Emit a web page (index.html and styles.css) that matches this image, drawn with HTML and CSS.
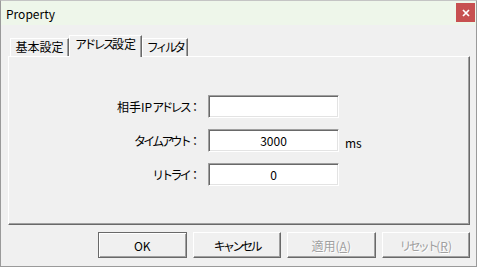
FILE: index.html
```html
<!DOCTYPE html>
<html>

<head>
    <meta charset="utf-8">
    <link rel="stylesheet" href="styles.css">
</head>

<body>
    <div class="window">
        <div class="titlebar">
            <span class="title">Property</span>
            <div class="close">
                <svg width="8" height="8" viewBox="0 0 8 8">
                    <path d="M1 1L7 7M7 1L1 7" stroke="#fff" stroke-width="1.7" fill="none"/>
                </svg>
            </div>
        </div>

        <div class="content">
            <div class="tabs">
                <div class="tab tab-basic">基本設定</div>
                <div class="tab tab-addr active"><span class="kana">アドレス</span>設定</div>
                <div class="tab tab-filter"><span class="kana">フィルタ</span></div>
            </div>

            <div class="panel">
                <div class="form">
                    <span class="label">相手IP<span class="kana">アドレス</span>：</span>
                    <div class="field"></div>
                    <span></span>

                    <span class="label"><span class="kana">タイムアウト</span>：</span>
                    <div class="field">3000</div>
                    <span class="unit">ms</span>

                    <span class="label"><span class="kana">リトライ</span>：</span>
                    <div class="field">0</div>
                    <span></span>
                </div>
            </div>

            <div class="buttons">
                <button class="btn btn-default">OK</button>
                <button class="btn"><span class="kana">キャンセル</span></button>
                <button class="btn btn-disabled">適用(<u>A</u>)</button>
                <button class="btn btn-disabled"><span class="kana">リセット</span>(<u>R</u>)</button>
            </div>
        </div>
    </div>
</body>

</html>
```

FILE: styles.css
```css
body {
    margin: 0;
    font-family: "Noto Sans CJK JP", sans-serif;
    font-size: 12px;
    color: #000;
    background-color: #f0f0f0;
}

.window {
    width: 477px;
    height: 267px;
    box-sizing: border-box;
    border: 1px solid #9a9a9a;
    border-top-color: #c4c4c4;
    background-color: #f0f0f0;
}

.titlebar {
    height: 24px;
    display: flex;
    justify-content: space-between;
    align-items: flex-start;
    padding: 0 1px 0 5px;
    background-color: #eef6ea;
}

.title {
    line-height: 25px;
}

.close {
    width: 19px;
    height: 19px;
    margin-top: 2px;
    display: flex;
    align-items: center;
    justify-content: center;
    background-color: #c75050;
}

.content {
    padding: 10px 6px 0 7px;
}

/* katakana in the reference font is narrow */
.kana {
    letter-spacing: -2.8px;
}

/* TABS */
.tabs {
    display: flex;
    align-items: flex-end;
    height: 21px;
    padding-left: 2px;
}

.tab {
    height: 18px;
    box-sizing: border-box;
    border-top: 1px solid #fff;
    border-left: 1px solid #fff;
    border-right: 1px solid #696969;
    box-shadow: inset -1px 0 #a0a0a0;
    display: flex;
    align-items: center;
    justify-content: center;
    padding-bottom: 1px;
    line-height: 1;
}

.tab-basic {
    width: 59px;
}

.tab-addr {
    width: 73px;
}

.tab-filter {
    width: 46px;
}

.tab.active {
    height: 22px;
    margin-bottom: -1px;
    padding-bottom: 5px;
    position: relative;
    z-index: 1;
    background-color: #f0f0f0;
}

/* PANEL */
.panel {
    height: 169px;
    box-sizing: border-box;
    border: 1px solid;
    border-color: #fff #696969 #696969 #fff;
    box-shadow: inset -1px -1px #a0a0a0;
    padding-top: 38px;
}

.form {
    display: grid;
    grid-template-columns: 199px 131px auto;
    grid-auto-rows: 23px;
    row-gap: 11px;
    align-items: center;
}

.label {
    text-align: right;
    padding-right: 7px;
}

.field {
    height: 23px;
    box-sizing: border-box;
    border: 1px solid;
    border-color: #a0a0a0 #fff #fff #a0a0a0;
    box-shadow: inset 1px 1px #696969, inset -1px -1px #e3e3e3;
    background-color: #fff;
    text-align: center;
    line-height: 21px;
}

.unit {
    margin-left: 6px;
    padding-top: 4px;
}

/* BUTTONS */
.buttons {
    display: flex;
    gap: 6px;
    padding-left: 90px;
    margin-top: 7px;
}

.btn {
    width: 89px;
    height: 26px;
    box-sizing: border-box;
    padding: 0;
    border: 1px solid;
    border-color: #fff #696969 #696969 #fff;
    box-shadow: inset -1px -1px #a0a0a0;
    background-color: #f0f0f0;
    font: inherit;
    color: #000;
}

.btn-default {
    border-color: #696969;
    box-shadow: inset 1px 1px #fff, inset -1px -1px #a0a0a0;
}

.btn-disabled {
    color: #a0a0a0;
    text-shadow: 1px 1px #fff;
}
```
